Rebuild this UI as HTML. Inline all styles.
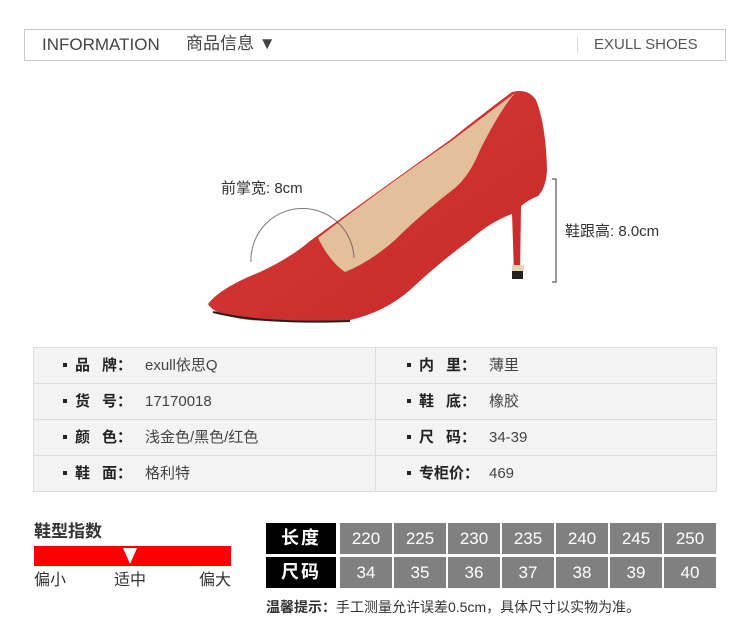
<!DOCTYPE html>
<html><head><meta charset="utf-8"><style>
*{margin:0;padding:0;box-sizing:border-box}
body{width:750px;height:642px;background:#fff;position:relative;font-family:"Liberation Sans","Noto Sans CJK SC",sans-serif;color:#333;overflow:hidden}
.a{position:absolute;white-space:nowrap;line-height:20px}
.hdr{left:24px;top:29px;width:702px;height:32px;border:1px solid #c8c8c8}
.tbl{left:33px;top:347px;width:684px;height:145px;background:#f3f3f3;border:1px solid #ddd}
.hl{position:absolute;left:0;width:100%;height:1px;background:#ddd}
.cell{position:absolute;font-size:15px;color:#444;line-height:20px;white-space:nowrap}
.cell b{display:inline-block;width:4px;height:4px;background:#222;margin-right:8px;vertical-align:middle;position:relative;top:-1px}
.cell i{font-style:normal;font-weight:bold;color:#222;display:inline-block;width:70px}
.cell s{text-decoration:none;margin-left:12px}
.sz{position:absolute;height:31px;line-height:31px;text-align:center;color:#fff;font-size:17px;background:#808080;width:52px}
.lb{background:#000;width:70px;font-weight:bold;font-size:18px;letter-spacing:2px}
</style></head><body>
<div class="a hdr"></div>
<div class="a" style="left:42px;top:35px;font-size:17px;color:#444">INFORMATION</div>
<div class="a" style="left:186px;top:34px;font-size:17px;color:#444">商品信息 ▼</div>
<div class="a" style="left:577px;top:36px;width:1px;height:17px;background:#ddd"></div>
<div class="a" style="left:594px;top:35px;font-size:15px;color:#555">EXULL SHOES</div>

<svg class="a" style="left:0;top:0" width="750" height="345">
<defs><linearGradient id="g" x1="0" y1="0" x2="1" y2="1"><stop offset="0" stop-color="#d93a36"/><stop offset="1" stop-color="#c42a2a"/></linearGradient></defs>
<path d="M208 304 Q220 288 260 272 Q290 258 310 241 Q380 190 450 140 Q490 108 512 92 Q528 88 536 100 Q546 125 547 170 Q546 188 538 196 Q528 200 521 206 L520 277 L514 277 Q513 240 512 214 Q490 222 470 240 Q440 262 410 290 Q385 312 350 320 Q300 324 250 320 Q215 316 208 304Z" fill="url(#g)"/>
<path d="M318 238 Q380 190 450 142 Q490 112 515 93 Q500 110 480 150 Q470 175 455 188 Q420 215 395 240 Q370 262 345 272 Q330 262 318 238Z" fill="#e4bf9c"/>
<path d="M213 312 Q260 324 350 321" stroke="#222" stroke-width="2" fill="none"/>
<rect x="512" y="265" width="12" height="6" fill="#e6d6b6"/><rect x="512" y="271" width="11" height="8" fill="#222"/>
<path d="M251 262 A50 50 0 0 1 354 258" stroke="#444" stroke-width="1" fill="none" opacity=".7"/>
<path d="M552 179 H556 V282 H552" stroke="#333" fill="none"/>
</svg>
<div class="a" style="left:221px;top:179px;font-size:15px;color:#333">前掌宽: 8cm</div>
<div class="a" style="left:565px;top:222px;font-size:15px;color:#333">鞋跟高: 8.0cm</div>

<div class="a tbl">
<div class="hl" style="top:35px"></div><div class="hl" style="top:71px"></div><div class="hl" style="top:107px"></div>
<div style="position:absolute;left:341px;top:0;width:1px;height:100%;background:#ddd"></div>
<div class="cell" style="left:29px;top:8px"><b></b><i>品<s>牌</s>：</i>exull依思Q</div>
<div class="cell" style="left:29px;top:44px"><b></b><i>货<s>号</s>：</i>17170018</div>
<div class="cell" style="left:29px;top:80px"><b></b><i>颜<s>色</s>：</i>浅金色/黑色/红色</div>
<div class="cell" style="left:29px;top:116px"><b></b><i>鞋<s>面</s>：</i>格利特</div>
<div class="cell" style="left:373px;top:8px"><b></b><i>内<s>里</s>：</i>薄里</div>
<div class="cell" style="left:373px;top:44px"><b></b><i>鞋<s>底</s>：</i>橡胶</div>
<div class="cell" style="left:373px;top:80px"><b></b><i>尺<s>码</s>：</i>34-39</div>
<div class="cell" style="left:373px;top:116px"><b></b><i>专柜价：</i>469</div>
</div>

<div class="a" style="left:34px;top:522px;font-size:17px;font-weight:bold;color:#333">鞋型指数</div>
<div class="a" style="left:34px;top:546px;width:197px;height:20px;background:#f00"></div>
<svg class="a" style="left:123px;top:548px" width="14" height="16"><path d="M0 0 H14 L7 16Z" fill="#fff"/></svg>
<div class="a" style="left:34px;top:571px;font-size:16px;color:#333">偏小</div>
<div class="a" style="left:114px;top:571px;font-size:16px;color:#333">适中</div>
<div class="a" style="left:199px;top:571px;font-size:16px;color:#333">偏大</div>

<div class="sz lb a" style="left:266px;top:523px">长度</div>
<div class="sz lb a" style="left:266px;top:557px">尺码</div>
<div class="sz a" style="left:340px;top:523px">220</div><div class="sz a" style="left:394px;top:523px">225</div><div class="sz a" style="left:448px;top:523px">230</div><div class="sz a" style="left:502px;top:523px">235</div><div class="sz a" style="left:556px;top:523px">240</div><div class="sz a" style="left:610px;top:523px">245</div><div class="sz a" style="left:664px;top:523px">250</div>
<div class="sz a" style="left:340px;top:557px">34</div><div class="sz a" style="left:394px;top:557px">35</div><div class="sz a" style="left:448px;top:557px">36</div><div class="sz a" style="left:502px;top:557px">37</div><div class="sz a" style="left:556px;top:557px">38</div><div class="sz a" style="left:610px;top:557px">39</div><div class="sz a" style="left:664px;top:557px">40</div>
<div class="a" style="left:266px;top:597px;font-size:14px;color:#333"><b>温馨提示：</b>手工测量允许误差0.5cm，具体尺寸以实物为准。</div>
</body></html>
